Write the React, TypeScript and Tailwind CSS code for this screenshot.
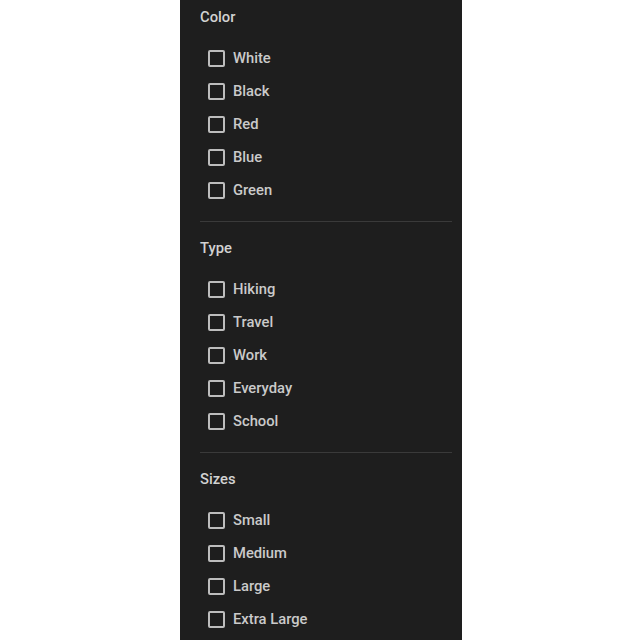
const sections = [
  { title: "Color", options: ["White", "Black", "Red", "Blue", "Green"] },
  { title: "Type", options: ["Hiking", "Travel", "Work", "Everyday", "School"] },
  { title: "Sizes", options: ["Small", "Medium", "Large", "Extra Large"] },
];

export default function App() {
  return (
    <div className="w-[640px] h-[640px] overflow-hidden bg-white" style={{ fontFamily: "Roboto, 'Liberation Sans', sans-serif" }}>
      <div className="ml-[180px] w-[282px] min-h-[640px] bg-[#1e1e1e] px-[20px] pr-[10px]">
        {sections.map((s, i) => (
          <div key={s.title}>
            {i > 0 && <div className="mt-[14px] h-px bg-[#3a3a3a]" />}
            <div className={i > 0 ? "pt-[16px]" : "pt-[7px]"}>
              <h3 className="h-[20px] leading-[20px] text-[14.75px] font-medium text-[#d2d2d2]">{s.title}</h3>
              <ul className="mt-[15px]">
                {s.options.map((o) => (
                  <li key={o} className="h-[33px] flex items-center pl-[8px]">
                    <span className="w-[17px] h-[17px] border-2 border-[#bdbdbd] rounded-[2px] shrink-0" />
                    <span className="ml-[8px] text-[14.75px] font-medium text-[#cacaca]">{o}</span>
                  </li>
                ))}
              </ul>
            </div>
          </div>
        ))}
      </div>
    </div>
  );
}
